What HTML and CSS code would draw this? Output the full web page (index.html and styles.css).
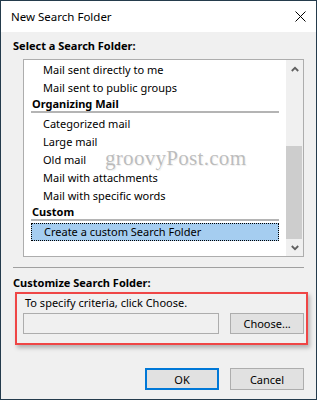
FILE: index.html
```html
<!DOCTYPE html>
<html lang="en">
  <head>
    <meta charset="UTF-8" />
    <title>New Search Folder</title>
    <link rel="stylesheet" href="styles.css">
  </head>
  <body>
    <div class="window">
      <div class="titlebar">
        <span class="title">New Search Folder</span>
        <svg class="close" width="11" height="11" viewBox="0 0 11 11">
          <path d="M0.5 0.5 L10.5 10.5 M10.5 0.5 L0.5 10.5" stroke="#000" stroke-width="1" fill="none"/>
        </svg>
      </div>

      <div class="dialog">
        <div class="label">Select a Search Folder:</div>

        <div class="listbox">
          <div class="items">
            <div class="item">Mail sent directly to me</div>
            <div class="item">Mail sent to public groups</div>
            <div class="group">Organizing Mail</div>
            <div class="item">Categorized mail</div>
            <div class="item">Large mail</div>
            <div class="item">Old mail</div>
            <div class="item">Mail with attachments</div>
            <div class="item">Mail with specific words</div>
            <div class="group">Custom</div>
            <div class="item selected">Create a custom Search Folder</div>
          </div>
          <div class="scrollbar">
            <div class="arrow">
              <svg width="8" height="6" viewBox="0 0 8 6"><path d="M0.8 5 L4 1.8 L7.2 5" stroke="#606060" stroke-width="1.8" fill="none"/></svg>
            </div>
            <div class="track"><div class="thumb"></div></div>
            <div class="arrow">
              <svg width="8" height="6" viewBox="0 0 8 6"><path d="M0.8 1 L4 4.2 L7.2 1" stroke="#606060" stroke-width="1.8" fill="none"/></svg>
            </div>
          </div>
          <div class="watermark">groovyPost.com</div>
        </div>

        <div class="separator"></div>

        <div class="label label-second">Customize Search Folder:</div>

        <div class="highlight">
          <div class="hint">To specify criteria, click Choose.</div>
          <div class="criteria-row">
            <div class="criteria-field"></div>
            <button class="btn">Choose...</button>
          </div>
        </div>

        <div class="actions">
          <button class="btn btn-default">OK</button>
          <button class="btn">Cancel</button>
        </div>
      </div>
    </div>
  </body>
</html>
```

FILE: styles.css
```css
body {
  margin: 0;
  font-family: "Noto Sans", "Open Sans", sans-serif;
  font-size: 11px;
  color: #000;
  background: #fff;
}

.window {
  width: 317px;
  height: 400px;
  box-sizing: border-box;
  border: 1px solid #243b4c;
  background: #f0f0f0;
  display: flex;
  flex-direction: column;
}

.titlebar {
  height: 31px;
  background: #fff;
  display: flex;
  align-items: center;
  justify-content: space-between;
  padding: 0 10px 0 10px;
}

.title {
  font-size: 11.5px;
}

.close {
  margin-top: -1px;
}

.dialog {
  padding: 0 12px;
}

.label {
  font-weight: bold;
  line-height: 16px;
  margin-top: 6px;
}

.label-second {
  margin-top: 7px;
}

.listbox {
  position: relative;
  margin: 5px 0 0 10px;
  width: 281px;
  height: 198px;
  box-sizing: border-box;
  border: 1px solid #adadad;
  background: #fff;
  display: flex;
  overflow: hidden;
}

.items {
  flex: 1;
  padding: 1px 7px 0 7px;
}

.item {
  height: 18px;
  line-height: 18px;
  padding-left: 12px;
  box-sizing: border-box;
}

.item.selected {
  background: #a5cdf0;
  border: 1px dotted #000;
  line-height: 16px;
}

.group {
  height: 16px;
  line-height: 14px;
  font-weight: bold;
  padding-left: 1px;
  border-bottom: 2px solid #b4b4b4;
  box-sizing: border-box;
  margin-bottom: 2px;
}

.scrollbar {
  width: 17px;
  background: #f0f0f0;
  display: flex;
  flex-direction: column;
}

.arrow {
  height: 17px;
  display: flex;
  align-items: center;
  justify-content: center;
}

.track {
  flex: 1;
  display: flex;
  flex-direction: column;
  padding-top: 69px;
}

.thumb {
  flex: 1;
  background: #cdcdcd;
  margin-right: 1px;
}

.watermark {
  position: absolute;
  left: 81px;
  top: 86px;
  font-family: "Liberation Serif", "DejaVu Serif", serif;
  font-size: 21px;
  letter-spacing: 0.3px;
  color: rgba(140, 140, 140, 0.55);
  text-shadow: 1px 1px 1px rgba(0, 0, 0, 0.08);
}

.separator {
  margin-top: 10px;
  height: 1px;
  background: #a0a0a0;
}

.highlight {
  margin: 1px -4px 0 2px;
  border: 2px solid #ef4646;
  padding: 2px 2px 9px 6px;
  box-shadow: 2px 3px 4px rgba(0, 0, 0, 0.25);
}

.hint {
  line-height: 14px;
  padding-left: 2px;
}

.criteria-row {
  display: flex;
  gap: 11px;
  margin-top: 3px;
}

.criteria-field {
  width: 197px;
  height: 21px;
  box-sizing: border-box;
  border: 1px solid #adadad;
  background: #f0f0f0;
}

.btn {
  width: 74px;
  height: 21px;
  box-sizing: border-box;
  border: 1px solid #adadad;
  background: #e1e1e1;
  font-family: inherit;
  font-size: 11px;
  color: #000;
  padding: 0;
  margin: 0;
}

.actions {
  display: flex;
  justify-content: flex-end;
  gap: 11px;
  margin-top: 23px;
}

.actions .btn {
  height: 22px;
}

.btn-default {
  border: 2px solid #0078d7;
}
```
